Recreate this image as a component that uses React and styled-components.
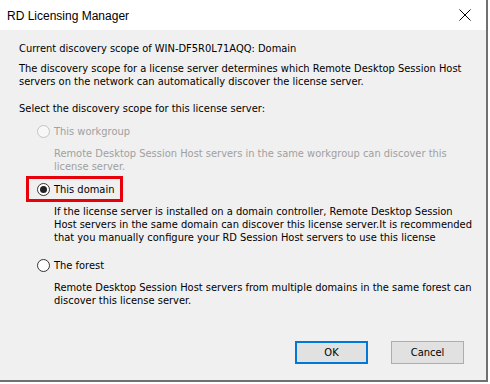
import React from "react";
import styled, { createGlobalStyle, css } from "styled-components";

const Global = createGlobalStyle`
  html, body { margin: 0; padding: 0; background: #ffffff; }
  body { width: 490px; height: 384px; overflow: hidden; }
`;

const Window = styled.div`
  width: 486px;
  height: 380px;
  background: #f0f0f0;
  border-right: 2px solid #707070;
  border-bottom: 2px solid #707070;
  display: flex;
  flex-direction: column;
  font-family: "DejaVu Sans Condensed", "Liberation Sans", Arial, sans-serif;
  font-size: 11px;
  color: #000;
`;

const TitleBar = styled.div`
  height: 30px;
  flex: none;
  background: #ffffff;
  display: flex;
  align-items: center;
  justify-content: space-between;
  padding: 0 9px 0 7px;
`;

const Title = styled.div`
  font-family: "Liberation Sans", Arial, sans-serif;
  font-size: 12px;
  color: #000;
  padding-top: 1px;
`;

const CloseButton = styled.div`
  width: 16px;
  height: 16px;
  display: flex;
  align-items: center;
  justify-content: center;
  margin-right: 4px;
`;

const Content = styled.div`
  flex: 1;
  display: flex;
  flex-direction: column;
  padding: 12px 19px 0 19px;
`;

const Line = styled.div`
  line-height: 13px;
  white-space: nowrap;
  margin-top: ${(p) => p.$mt || 0}px;
  color: ${(p) => (p.$disabled ? "#a0a0a0" : "#000")};
`;

const Option = styled.div`
  display: flex;
  flex-direction: column;
  margin-top: ${(p) => p.$mt || 0}px;
`;

const OptionRow = styled.div`
  position: relative;
  display: flex;
  align-items: center;
  height: 17px;
  padding-left: 18px;
  gap: 4px;
  color: ${(p) => (p.$disabled ? "#a0a0a0" : "#000")};
  ${(p) =>
    p.$highlight &&
    css`
      &::before {
        content: "";
        position: absolute;
        left: 7px;
        top: -5px;
        width: 91px;
        height: 20px;
        border: 3px solid #e8000b;
      }
    `}
`;

const RadioCircle = styled.span`
  width: 11px;
  height: 11px;
  border-radius: 50%;
  border: 1px solid ${(p) => (p.$disabled ? "#c4c4c4" : "#333333")};
  background: ${(p) => (p.$disabled ? "#f7f7f7" : "#ffffff")};
  display: flex;
  align-items: center;
  justify-content: center;
  flex: none;
  &::after {
    content: "";
    display: ${(p) => (p.$checked ? "block" : "none")};
    width: 7px;
    height: 7px;
    border-radius: 50%;
    background: #222;
  }
`;

const Description = styled.div`
  margin-left: 35px;
  margin-top: 7px;
  line-height: 13px;
  white-space: nowrap;
  color: ${(p) => (p.$disabled ? "#a0a0a0" : "#000")};
`;

const ButtonBar = styled.div`
  margin-top: auto;
  margin-bottom: 16px;
  display: flex;
  justify-content: flex-end;
  gap: 23px;
  padding-right: 3px;
`;

const Button = styled.div`
  width: ${(p) => (p.$primary ? "69px" : "71px")};
  height: ${(p) => (p.$primary ? "19px" : "21px")};
  border: ${(p) => (p.$primary ? "2px solid #0078d7" : "1px solid #adadad")};
  background: #e1e1e1;
  display: flex;
  align-items: center;
  justify-content: center;
`;

function Radio({ label, checked, disabled, highlight, children, mt }) {
  return (
    <Option $mt={mt}>
      <OptionRow $disabled={disabled} $highlight={highlight}>
        <RadioCircle $checked={checked} $disabled={disabled} />
        <span>{label}</span>
      </OptionRow>
      <Description $disabled={disabled}>{children}</Description>
    </Option>
  );
}

export default function App() {
  return (
    <>
      <Global />
      <Window>
        <TitleBar>
          <Title>RD Licensing Manager</Title>
          <CloseButton>
            <svg width="12" height="12" viewBox="0 0 12 12">
              <path d="M0.5 0.5 L11.5 11.5 M11.5 0.5 L0.5 11.5" stroke="#000" strokeWidth="1" fill="none" />
            </svg>
          </CloseButton>
        </TitleBar>
        <Content>
          <Line>Current discovery scope of WIN-DF5R0L71AQQ: Domain</Line>
          <Line $mt={7}>
            The discovery scope for a license server determines which Remote Desktop Session Host
          </Line>
          <Line>servers on the network can automatically discover the license server.</Line>
          <Line $mt={14}>Select the discovery scope for this license server:</Line>
          <Radio label="This workgroup" disabled mt={8}>
            Remote Desktop Session Host servers in the same workgroup can discover this
            <br />
            license server.
          </Radio>
          <Radio label="This domain" checked highlight mt={8}>
            If the license server is installed on a domain controller, Remote Desktop Session
            <br />
            Host servers in the same domain can discover this license server.It is recommended
            <br />
            that you manually configure your RD Session Host servers to use this license
          </Radio>
          <Radio label="The forest" mt={13}>
            Remote Desktop Session Host servers from multiple domains in the same forest can
            <br />
            discover this license server.
          </Radio>
          <ButtonBar>
            <Button $primary>OK</Button>
            <Button>Cancel</Button>
          </ButtonBar>
        </Content>
      </Window>
    </>
  );
}
